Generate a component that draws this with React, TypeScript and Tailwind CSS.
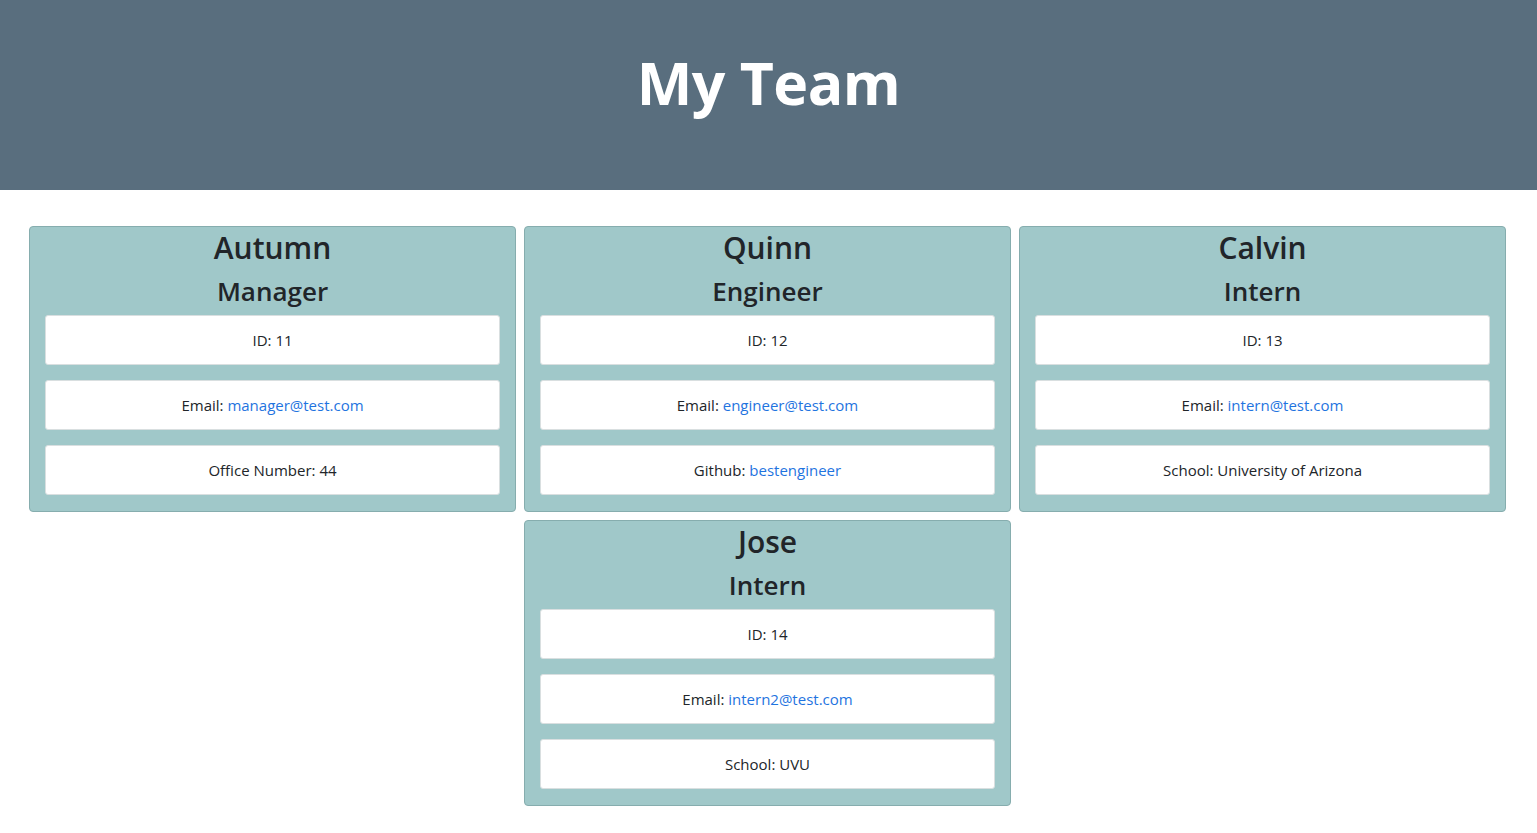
import React from "react";

type Member = {
  name: string;
  role: string;
  id: number;
  email: string;
  extraLabel: string;
  extraValue: string;
  extraLink?: boolean;
};

const members: Member[] = [
  { name: "Autumn", role: "Manager", id: 11, email: "manager@test.com", extraLabel: "Office Number", extraValue: "44" },
  { name: "Quinn", role: "Engineer", id: 12, email: "engineer@test.com", extraLabel: "Github", extraValue: "bestengineer", extraLink: true },
  { name: "Calvin", role: "Intern", id: 13, email: "intern@test.com", extraLabel: "School", extraValue: "University of Arizona" },
  { name: "Jose", role: "Intern", id: 14, email: "intern2@test.com", extraLabel: "School", extraValue: "UVU" },
];

function Item({ children }: { children: React.ReactNode }) {
  return (
    <li className="h-[50px] flex items-center justify-center bg-white border border-[#d9dfe0] rounded-[3px] text-[15px] text-[#212529]">
      <span>{children}</span>
    </li>
  );
}

function Card({ m }: { m: Member }) {
  return (
    <div className="w-[487px] h-[286px] bg-[#a0c8c9] border border-[#86adae] rounded-[4px] px-[15px] pt-px text-[#212529]">
      <h2 className="text-center text-[30px] leading-[40px] font-semibold">{m.name}</h2>
      <h3 className="text-center text-[26px] leading-[34px] font-semibold mt-[6px]">{m.role}</h3>
      <ul className="mt-[7px] flex flex-col gap-[15px]">
        <Item>ID: {m.id}</Item>
        <Item>
          Email: <a className="text-[#1f74e0]">{m.email}</a>
        </Item>
        <Item>
          {m.extraLabel}:{" "}
          {m.extraLink ? <a className="text-[#1f74e0]">{m.extraValue}</a> : m.extraValue}
        </Item>
      </ul>
    </div>
  );
}

export default function App() {
  return (
    <div className="min-h-[833px] bg-white" style={{ fontFamily: '"Open Sans", "Noto Sans", sans-serif' }}>
      <header className="h-[190px] bg-[#596e7e] flex items-center justify-center">
        <h1 className="text-white text-[59px] font-bold leading-none -mt-[26px] tracking-[-0.5px]">My Team</h1>
      </header>
      <main className="pt-[36px]">
        <div className="w-[1477px] ml-[29px] flex flex-wrap justify-center gap-x-[8px] gap-y-[8px]">
          {members.map((m) => (
            <Card key={m.name} m={m} />
          ))}
        </div>
      </main>
    </div>
  );
}
